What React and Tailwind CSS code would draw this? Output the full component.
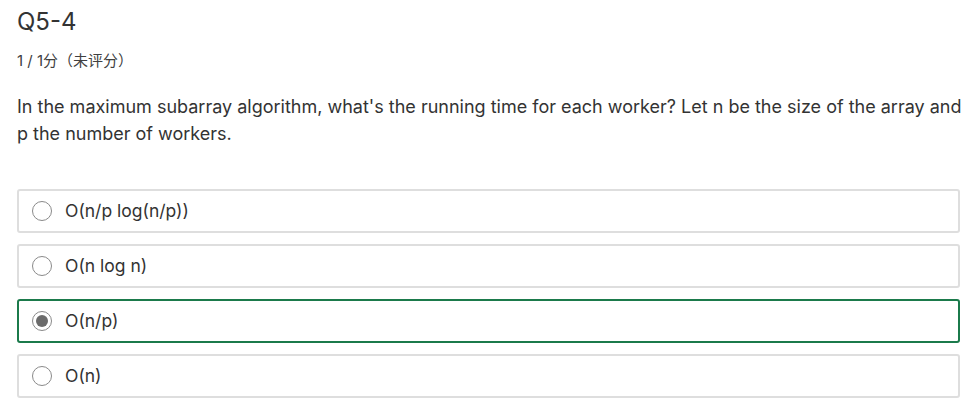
import React from "react";

const options = [
  { label: "O(n/p log(n/p))", selected: false },
  { label: "O(n log n)", selected: false },
  { label: "O(n/p)", selected: true },
  { label: "O(n)", selected: false },
];

function Radio({ selected }) {
  return (
    <span className="flex h-[20px] w-[20px] shrink-0 items-center justify-center rounded-full border border-[#8a8a8a] bg-white">
      {selected && <span className="h-[12px] w-[12px] rounded-full bg-[#6b6b6b]" />}
    </span>
  );
}

export default function App() {
  return (
    <div className="min-h-[407px] w-[977px] bg-white pl-[17px] pr-[17px] font-['Inter','Noto_Sans_CJK_SC',sans-serif] text-[#333333]">
      <div className="pt-[6px] text-[24px] leading-[32px]">Q5-4</div>
      <div className="mt-[13px] text-[15px] leading-[20px] text-[#404040]">1 / 1分（未评分）</div>
      <div className="mt-[22px] w-[946px] text-[18px] leading-[27px] text-[#333333]">
        In the maximum subarray algorithm, what's the running time for each worker? Let n be the size of the array and p the number of workers.
      </div>
      <div className="mt-[42px] flex w-[943px] flex-col gap-[11px]">
        {options.map((o) => (
          <div
            key={o.label}
            className={
              "flex h-[44px] items-center gap-[13px] rounded-[3px] border-2 pl-[13px] " +
              (o.selected ? "border-[#1b7a4b]" : "border-[#dedede]")
            }
          >
            <Radio selected={o.selected} />
            <span className="text-[17.5px] leading-[24px] text-[#333333]">{o.label}</span>
          </div>
        ))}
      </div>
    </div>
  );
}
